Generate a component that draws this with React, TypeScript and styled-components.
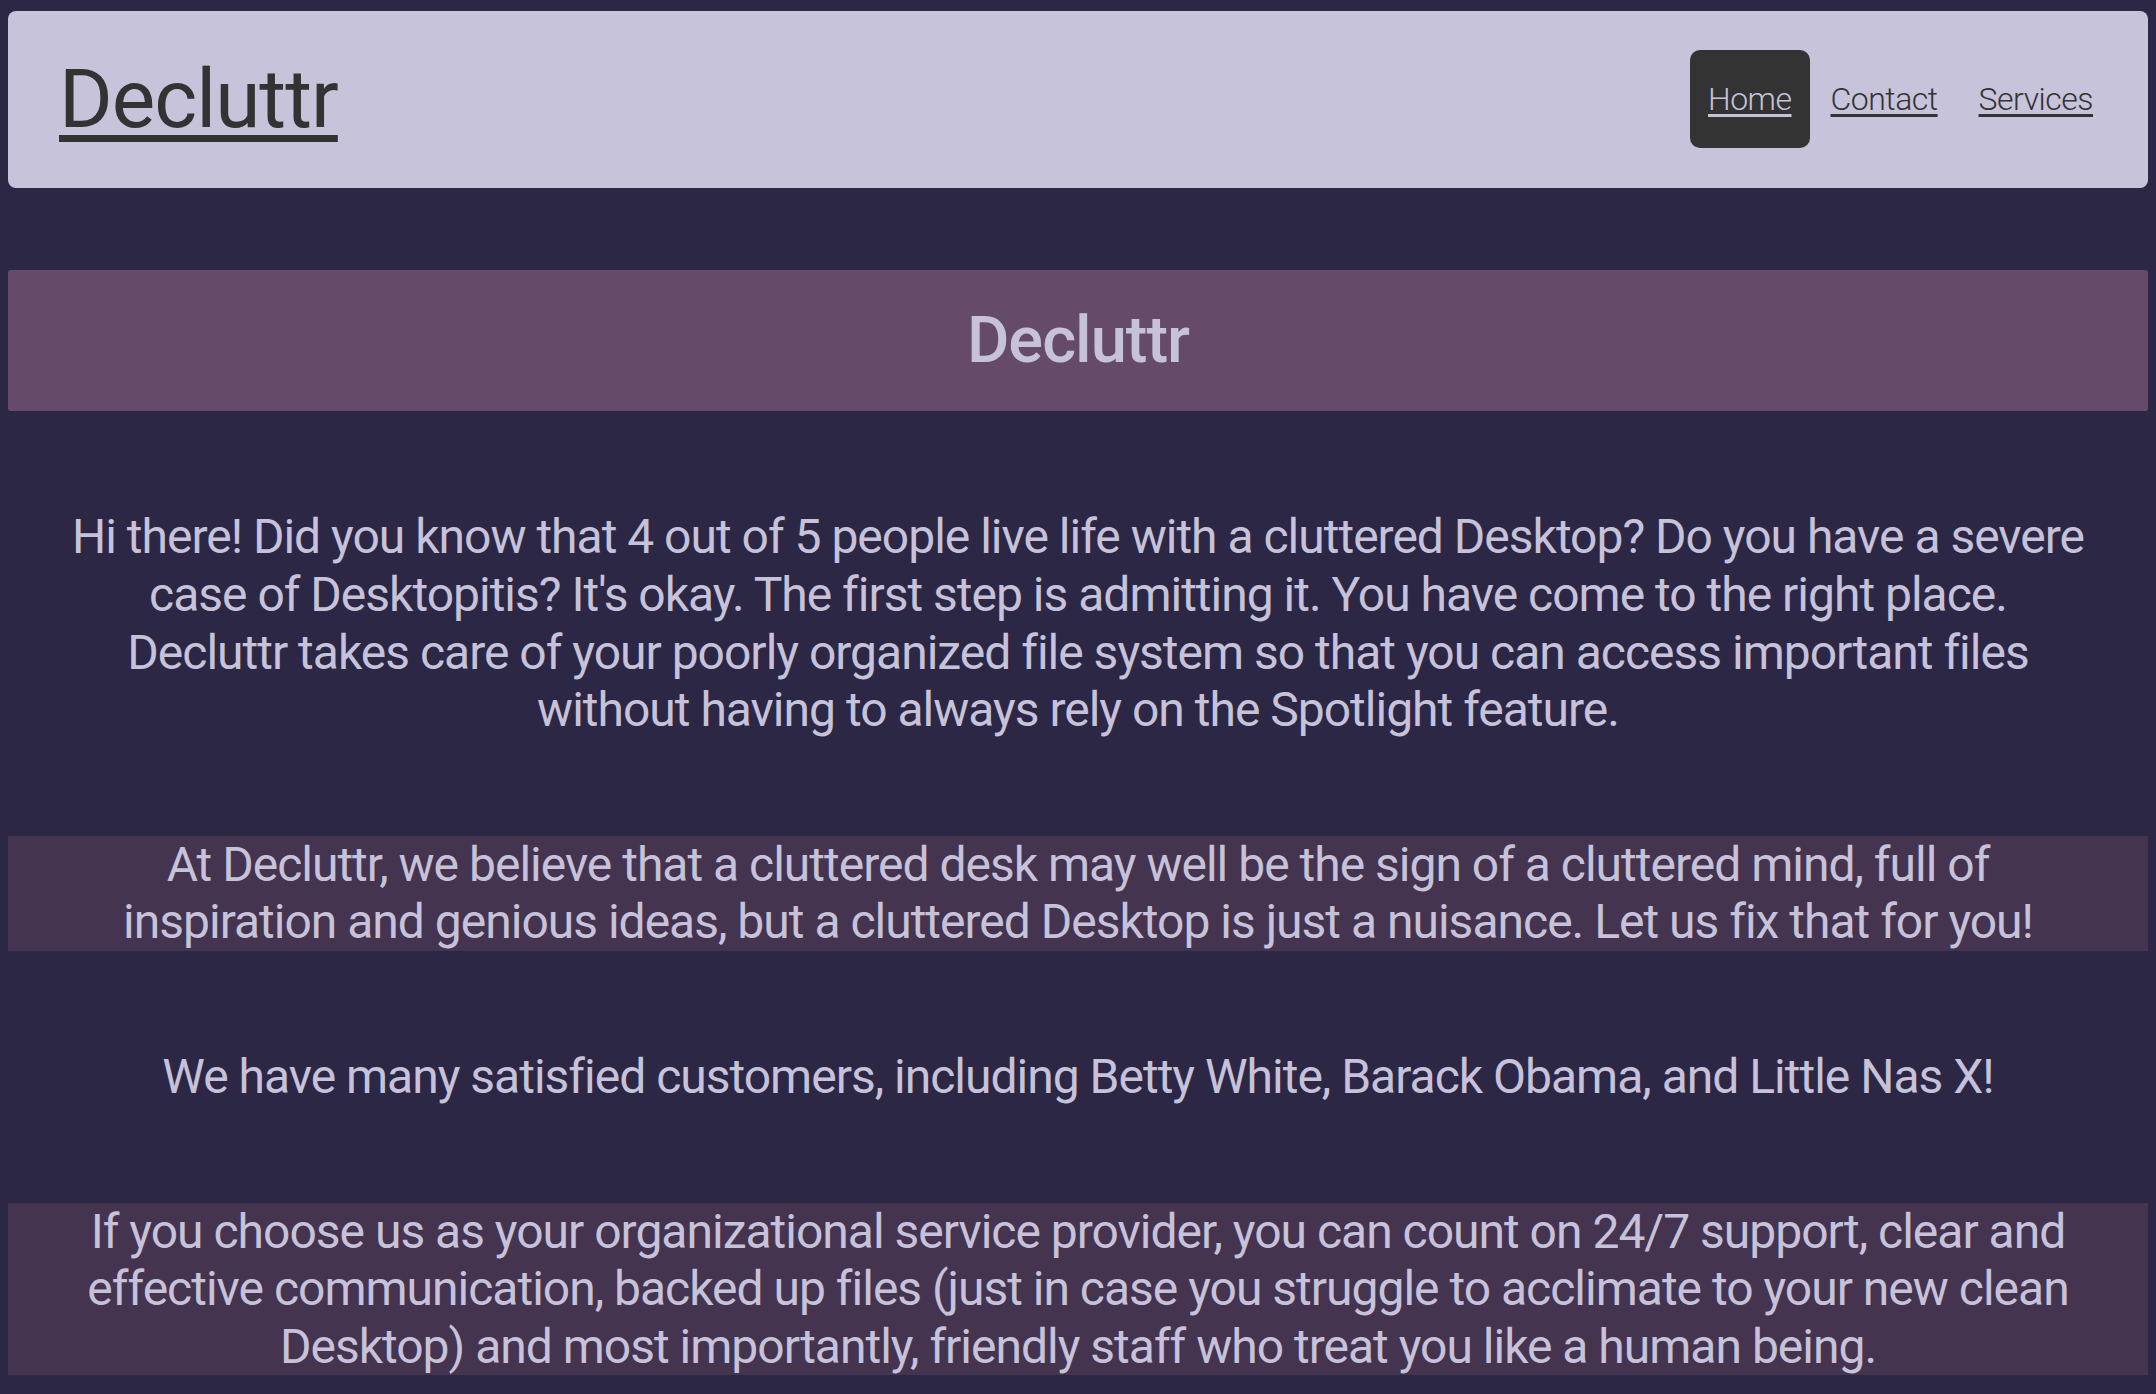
import React from 'react';
import styled, { createGlobalStyle } from 'styled-components';

const GlobalStyle = createGlobalStyle`
  body {
    margin: 8px;
    background-color: #2d2746;
    font-family: Roboto, "Liberation Sans", sans-serif;
    color: #c6c2da;
  }
`;

const Header = styled.header`
  display: flex;
  align-items: center;
  justify-content: space-between;
  margin-top: 3px;
  padding: 39px 55px 40px 51px;
  background-color: #c6c3da;
  border-radius: 8px;
`;

const Logo = styled.a`
  font-size: 82px;
  line-height: 1.2;
  color: #333333;
  text-decoration-thickness: 7px;
  text-underline-offset: 8px;
  letter-spacing: -1px;
`;

const Nav = styled.nav`
  display: flex;
  align-items: center;
  gap: 21px;
`;

const NavLink = styled.a<{ $active?: boolean }>`
  font-size: 32px;
  font-weight: 300;
  line-height: 1.2;
  letter-spacing: -0.5px;
  padding: ${(p) => (p.$active ? '30px 18px' : '30px 0')};
  margin-right: ${(p) => (p.$active ? '0' : '20px')};
  border-radius: 10px;
  color: ${(p) => (p.$active ? '#c6c2da' : '#333333')};
  background-color: ${(p) => (p.$active ? '#333333' : 'transparent')};
  text-underline-offset: 4px;

  &:last-child {
    margin-right: 0;
  }
`;

const Main = styled.main`
  display: flex;
  flex-direction: column;
  gap: 97px;
  margin-top: 82px;
`;

const Hero = styled.section`
  background-color: #664a69;
  border-radius: 3px;
  padding: 31px 0 32px;
  text-align: center;
`;

const HeroTitle = styled.h1`
  margin: 0;
  font-size: 65px;
  font-weight: 500;
  line-height: 1.2;
  letter-spacing: -1px;
`;

const Copy = styled.p<{ $shaded?: boolean }>`
  margin: 0;
  padding: 0 57px;
  font-size: 48px;
  line-height: 1.2;
  letter-spacing: -1px;
  text-align: center;
  background-color: ${(p) => (p.$shaded ? '#45344f' : 'transparent')};
`;

export default function App() {
  return (
    <>
      <GlobalStyle />
      <Header>
        <Logo href="#">Decluttr</Logo>
        <Nav>
          <NavLink $active href="#">Home</NavLink>
          <NavLink href="#">Contact</NavLink>
          <NavLink href="#">Services</NavLink>
        </Nav>
      </Header>
      <Main>
        <Hero>
          <HeroTitle>Decluttr</HeroTitle>
        </Hero>
        <Copy>
          Hi there! Did you know that 4 out of 5 people live life with a cluttered Desktop? Do you have a
          severe case of Desktopitis? It's okay. The first step is admitting it. You have come to the right
          place. Decluttr takes care of your poorly organized file system so that you can access important
          files without having to always rely on the Spotlight feature.
        </Copy>
        <Copy $shaded>
          At Decluttr, we believe that a cluttered desk may well be the sign of a cluttered mind, full of
          inspiration and genious ideas, but a cluttered Desktop is just a nuisance. Let us fix that for you!
        </Copy>
        <Copy>
          We have many satisfied customers, including Betty White, Barack Obama, and Little Nas X!
        </Copy>
        <Copy $shaded>
          If you choose us as your organizational service provider, you can count on 24/7 support, clear and
          effective communication, backed up files (just in case you struggle to acclimate to your new clean
          Desktop) and most importantly, friendly staff who treat you like a human being.
        </Copy>
      </Main>
    </>
  );
}
